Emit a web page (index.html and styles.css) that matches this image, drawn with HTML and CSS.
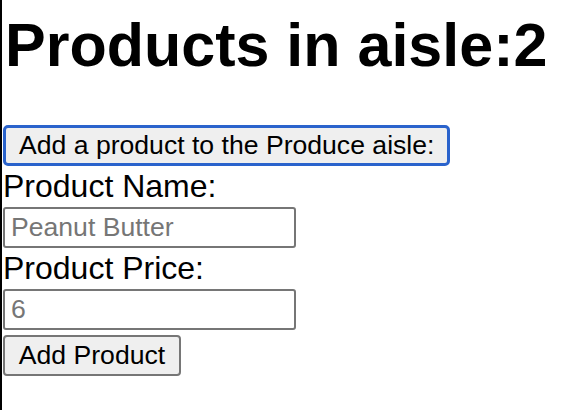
FILE: index.html
```html
<!DOCTYPE html>
<html>
<head>
<meta charset="utf-8">
<link rel="stylesheet" href="styles.css">
</head>
<body>
<div class="page">
  <h1 class="title">Products in aisle:2</h1>
  <button class="toggle">Add a product to the Produce aisle:</button>
  <form class="form">
    <label class="label" for="name">Product Name:</label>
    <input class="field" id="name" type="text" placeholder="Peanut Butter">
    <label class="label" for="price">Product Price:</label>
    <input class="field" id="price" type="text" placeholder="6">
    <button class="submit" type="button">Add Product</button>
  </form>
</div>
</body>
</html>
```
FILE: styles.css
```css
html, body {
  margin: 0;
  padding: 0;
  background: #fff;
}
body {
  font-family: "Liberation Sans", Arial, sans-serif;
  color: #000;
}
.page {
  min-height: 410px;
  border-left: 2px solid #000;
  padding-left: 1px;
  box-sizing: border-box;
}
.title {
  margin: 0;
  padding-top: 10px;
  height: 125px;
  box-sizing: border-box;
  font-size: 61px;
  font-weight: bold;
  line-height: 70px;
  padding-left: 2px;
}
.toggle {
  display: block;
  margin: 0;
  box-sizing: border-box;
  height: 41px;
  padding: 0 13px;
  font-family: inherit;
  font-size: 26.6px;
  color: #000;
  background: #efefef;
  border: 3px solid #2a63cc;
  border-radius: 5px;
}
.form {
  display: flex;
  flex-direction: column;
  align-items: flex-start;
}
.label {
  display: block;
  font-size: 32px;
  line-height: 41px;
  height: 41px;
}
.field {
  box-sizing: border-box;
  width: 293px;
  height: 41px;
  margin: 0;
  padding: 0 6px;
  font-family: inherit;
  font-size: 26.6px;
  border: 2px solid #767676;
  border-radius: 3px;
  background: #fff;
}
.field::placeholder {
  color: #767676;
}
.submit {
  margin-top: 5px;
  box-sizing: border-box;
  height: 41px;
  width: 178px;
  padding: 0;
  font-family: inherit;
  font-size: 26.6px;
  color: #000;
  background: #efefef;
  border: 2px solid #767676;
  border-radius: 4px;
}
```
